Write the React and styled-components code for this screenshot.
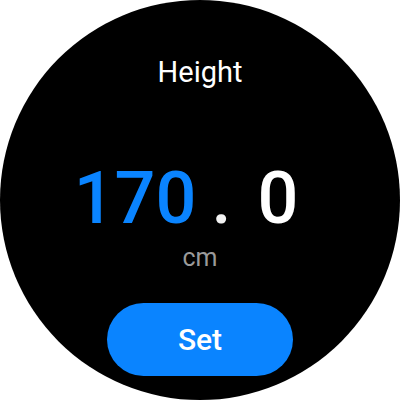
import styled, { createGlobalStyle } from 'styled-components'

const Global = createGlobalStyle`
    html, body {
        margin: 0;
        padding: 0;
        background: #ffffff;
    }
    body {
        font-family: Roboto, "Noto Sans", sans-serif;
    }
`

const Watch = styled.div`
    width: 400px;
    height: 400px;
    border-radius: 50%;
    background: #000000;
    overflow: hidden;
    display: flex;
    flex-direction: column;
    align-items: center;
    padding-top: 54px;
    box-sizing: border-box;
`

const Title = styled.div`
    font-size: 29px;
    line-height: 36px;
    color: #ffffff;
`

const Value = styled.div`
    display: flex;
    align-items: baseline;
    gap: 15px;
    margin-top: 73px;
    margin-right: 28px;
    font-size: 72px;
    font-weight: 500;
    line-height: 72px;
`

const Digits = styled.span`
    color: ${p => p.$active ? '#0a84ff' : '#ffffff'};
`

const Dot = styled.span`
    color: #f2f2f2;
    margin-right: 11px;
`

const Unit = styled.div`
    margin-top: 8px;
    font-size: 25px;
    line-height: 30px;
    color: #9a9a9a;
`

const Button = styled.button`
    margin-top: 30px;
    width: 186px;
    height: 73px;
    border: none;
    border-radius: 37px;
    background: #0a84ff;
    color: #ffffff;
    font-family: Roboto, sans-serif;
    font-size: 30px;
    font-weight: 500;
`

export default function App() {
    return (
        <>
            <Global />
            <Watch>
                <Title>Height</Title>
                <Value>
                    <Digits $active>170</Digits>
                    <Dot>.</Dot>
                    <Digits>0</Digits>
                </Value>
                <Unit>cm</Unit>
                <Button>Set</Button>
            </Watch>
        </>
    )
}
